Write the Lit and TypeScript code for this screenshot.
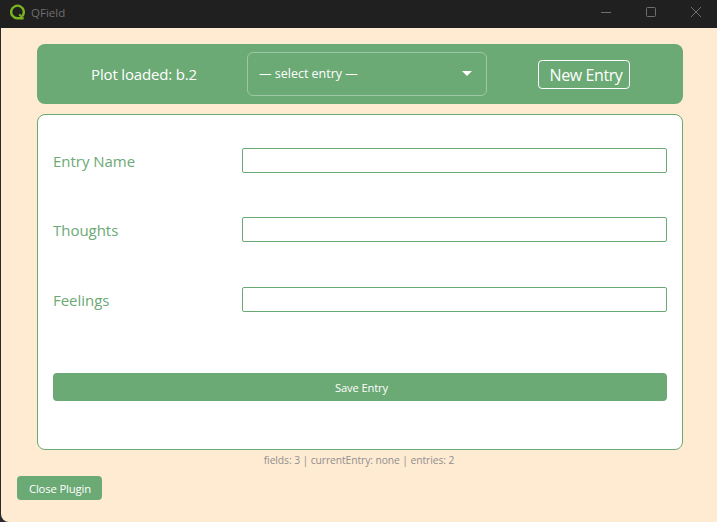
import { LitElement, html, css } from "lit";
import { customElement } from "lit/decorators.js";

@customElement("app-root")
export class AppRoot extends LitElement {
  static styles = css`
    :host { display: block; width: 717px; height: 522px; background: #2b2b2b; overflow: hidden; font-family: "Open Sans", "Noto Sans", sans-serif; }
    * { box-sizing: border-box; }
    .titlebar { height: 28px; background: #202020; display: flex; align-items: center; padding: 0 0 4px 9px; color: #6f6f6f; font-size: 11.5px; }
    .logo { width: 16px; height: 16px; margin-right: 6px; display: block; }
    .title { flex: 1; }
    .winbtn { width: 45px; height: 24px; display: flex; align-items: center; justify-content: center; }
    .winbtn:last-child { margin-right: -2px; width: 46px; }
    .winbtn svg { display: block; width: 12px; height: 12px; }
    .body { height: 494px; margin-left: 1px; background: #ffebd2; border-bottom-left-radius: 8px; padding: 16px 0 0 16px; display: flex; flex-direction: column; }
    .header { margin-left: 20px; width: 646px; height: 60px; background: #6ba975; border-radius: 8px; display: grid; grid-template-columns: 210px 240px 1fr; align-items: center; color: #fff; }
    .plot { text-align: center; font-size: 15px; padding-left: 4px; letter-spacing: -0.17px; }
    .select { height: 44px; border: 1px solid rgba(255,255,255,.35); border-radius: 6px; display: flex; align-items: center; justify-content: space-between; padding: 0 14px 2px 11px; font-size: 12.5px; }
    .caret { width: 0; height: 0; border-left: 5px solid transparent; border-right: 5px solid transparent; border-top: 5px solid #fff; }
    .new { justify-self: center; margin-right: 3px; width: 92px; height: 29px; border: 1px solid #fff; border-radius: 4px; display: flex; align-items: center; justify-content: center; font-size: 16px; letter-spacing: -0.4px; padding: 2px 0 0 5px; }
    .card { margin: 10px 0 0 20px; width: 646px; height: 336px; background: #fff; border: 1px solid #6ba975; border-radius: 8px; padding: 33px 15px 0; display: flex; flex-direction: column; }
    .row { display: grid; grid-template-columns: 189px 425px; align-items: center; height: 25px; color: #6ba975; font-size: 15px; letter-spacing: -0.03px; }
    .row + .row { margin-top: 44px; }
    .row.third { margin-top: 45px; }
    .field { height: 25px; border: 1px solid #6ba975; border-radius: 2px; background: #fff; }
    .save { margin-top: 61px; height: 28px; background: #6ba975; color: #fff; border-radius: 4px; display: flex; align-items: center; justify-content: center; font-size: 11.2px; letter-spacing: -0.15px; padding-left: 3px; }
    .status { margin-left: 19px; width: 646px; height: 20px; display: flex; align-items: center; justify-content: center; font-size: 10.3px; color: #8f8f8f; letter-spacing: -0.08px; }
    .close { margin-top: 6px; width: 85px; height: 24px; background: #6ba975; color: #fff; border-radius: 4px; display: flex; align-items: center; justify-content: center; font-size: 11.3px; letter-spacing: -0.15px; padding-left: 1px; }
  `;

  render() {
    return html`
      <div class="titlebar">
        <svg class="logo" viewBox="0 0 16 16" fill="none">
          <path d="M13.2 12.2A6.3 6.3 0 1 0 8.4 14.3H14.6" stroke="#7ab51d" stroke-width="2.4"/>
          <path d="M10.2 10.4l2.6 2.6" stroke="#7ab51d" stroke-width="2"/>
        </svg>
        <span class="title">QField</span>
        <div class="winbtn"><svg viewBox="0 0 12 12"><path d="M1 6.5H11" stroke="#6f6f6f"/></svg></div>
        <div class="winbtn"><svg viewBox="0 0 12 12"><rect x="1.5" y="1.5" width="9" height="9" rx="1" fill="none" stroke="#6f6f6f"/></svg></div>
        <div class="winbtn"><svg viewBox="0 0 12 12"><path d="M1 1L11 11M11 1L1 11" stroke="#6f6f6f"/></svg></div>
      </div>
      <div class="body">
        <div class="header">
          <div class="plot">Plot loaded: b.2</div>
          <div class="select"><span>— select entry —</span><i class="caret"></i></div>
          <div class="new">New Entry</div>
        </div>
        <div class="card">
          <div class="row"><span>Entry Name</span><div class="field"></div></div>
          <div class="row"><span>Thoughts</span><div class="field"></div></div>
          <div class="row third"><span>Feelings</span><div class="field"></div></div>
          <div class="save">Save Entry</div>
        </div>
        <div class="status">fields: 3 | currentEntry: none | entries: 2</div>
        <div class="close">Close Plugin</div>
      </div>
    `;
  }
}
